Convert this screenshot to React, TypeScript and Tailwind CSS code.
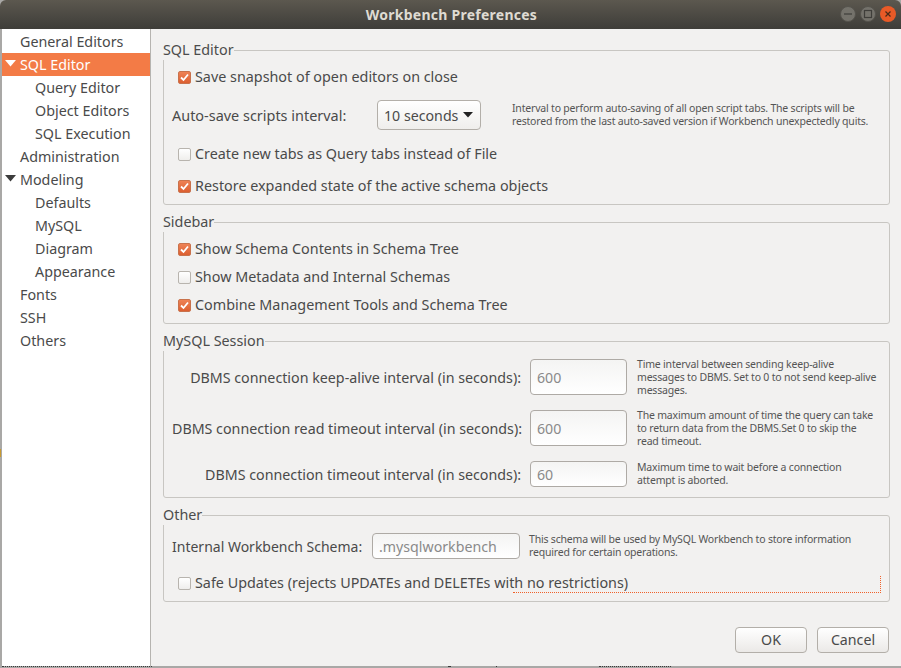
const font = { fontFamily: '"Noto Sans", sans-serif' };

function Check({ checked, label }: { checked?: boolean; label: string }) {
  return (
    <div className="flex items-center h-[26px] pl-[14px]">
      {checked ? (
        <span className="w-[13px] h-[13px] rounded-[2px] border border-[#c9724c] bg-gradient-to-b from-[#ee8255] to-[#dc5f30] flex items-center justify-center shrink-0">
          <svg width="11" height="11" viewBox="0 0 11 11" fill="none">
            <path d="M2 5.5 L4.5 8 L9 2.5" stroke="#fff" strokeWidth="1.8" />
          </svg>
        </span>
      ) : (
        <span className="w-[13px] h-[13px] rounded-[2px] border border-[#b8b4ae] bg-gradient-to-b from-white to-[#efeeec] shrink-0" />
      )}
      <span className="ml-[4px] text-[14.35px] leading-none whitespace-nowrap">{label}</span>
    </div>
  );
}

function Group({ title, children }: { title: string; children: React.ReactNode }) {
  return (
    <fieldset className="border border-[#c8c6c2] rounded-[3px] m-0 px-0 pb-0 pt-0 min-w-0">
      <legend className="h-5 p-0 -ml-px text-[14.35px] leading-5 text-[#4c4c4c] whitespace-nowrap">{title}</legend>
      {children}
    </fieldset>
  );
}

function Help({ children, className = "" }: { children: React.ReactNode; className?: string }) {
  return <div className={`text-[10.5px] leading-[13px] tracking-[-0.19px] whitespace-nowrap text-[#555] ${className}`}>{children}</div>;
}

function Field({ value, className }: { value: string; className: string }) {
  return (
    <div className={`border border-[#aeaaa5] rounded-[4px] bg-gradient-to-b from-[#f4f4f3] to-white flex items-center pl-[6px] pt-[1px] text-[14.2px] text-[#8a8a8a] shrink-0 ${className}`}>
      {value}
    </div>
  );
}

function SessionRow({ label, value, h, help, mt }: { label: string; value: string; h: string; help: React.ReactNode; mt: string }) {
  return (
    <div className={`flex items-center ${h} ${mt}`}>
      <div className="w-[349px] ml-[8px] pt-[2px] text-right text-[14.25px] whitespace-nowrap">{label}</div>
      <Field value={value} className={`ml-[9px] w-[97px] ${h}`} />
      <Help className="ml-[10px] w-[245px]">{help}</Help>
    </div>
  );
}

const items: { label: string; indent?: boolean; arrow?: boolean; selected?: boolean }[] = [
  { label: "General Editors" },
  { label: "SQL Editor", arrow: true, selected: true },
  { label: "Query Editor", indent: true },
  { label: "Object Editors", indent: true },
  { label: "SQL Execution", indent: true },
  { label: "Administration" },
  { label: "Modeling", arrow: true },
  { label: "Defaults", indent: true },
  { label: "MySQL", indent: true },
  { label: "Diagram", indent: true },
  { label: "Appearance", indent: true },
  { label: "Fonts" },
  { label: "SSH" },
  { label: "Others" },
];

function Btn({ label }: { label: string }) {
  return (
    <div className="w-[72px] h-[26px] border border-[#b3afa9] rounded-[4px] bg-gradient-to-b from-white to-[#ebe9e7] flex items-center justify-center text-[14.2px]">
      {label}
    </div>
  );
}

export default function App() {
  return (
    <div style={font} className="relative w-[901px] h-[668px] overflow-hidden bg-[#a9a8a6] text-[#4a4a4a] flex flex-col">
      <div className="h-[29px] shrink-0 rounded-t-[6px] bg-gradient-to-b from-[#5c584f] to-[#3e3d39] relative flex items-center justify-center pl-[2px]">
        <span className="text-[14px] font-bold tracking-[0.25px] text-[#dfdbd2]">Workbench Preferences</span>
        <div className="absolute right-[5px] top-[6px] flex gap-[4px]">
          <span className="w-4 h-4 rounded-full bg-[#74726b] border border-[#55534d] flex items-center justify-center">
            <svg width="10" height="10" viewBox="0 0 10 10"><path d="M1 5h8" stroke="#3f3e3a" strokeWidth="1.2" /></svg>
          </span>
          <span className="w-4 h-4 rounded-full bg-[#74726b] border border-[#55534d] flex items-center justify-center">
            <svg width="10" height="10" viewBox="0 0 10 10"><rect x="1.5" y="1.5" width="7" height="7" fill="none" stroke="#3f3e3a" strokeWidth="1.2" /></svg>
          </span>
          <span className="w-4 h-4 rounded-full bg-[#e95a27] flex items-center justify-center">
            <svg width="10" height="10" viewBox="0 0 10 10"><path d="M2.5 2.5l5 5M7.5 2.5l-5 5" stroke="#4a2a18" strokeWidth="1.2" /></svg>
          </span>
        </div>
      </div>
      <div className="h-[637px] shrink-0 ml-[2px] flex bg-[#f2f1f0]">
        <div className="w-[148px] shrink-0 bg-white pt-[1px] text-[14.3px]">
          {items.map((it) => (
            <div key={it.label} className={`h-[23px] flex items-center relative ${it.indent ? "pl-[33px]" : "pl-[18px]"} ${it.selected ? "bg-[#f37b46] text-white" : ""}`}>
              {it.arrow && (
                <svg className="absolute left-[3px] top-[7px]" width="11" height="7" viewBox="0 0 11 7">
                  <path d="M0 0h11L5.5 6.5z" fill={it.selected ? "#fff" : "#3c3c3c"} />
                </svg>
              )}
              {it.label}
            </div>
          ))}
        </div>
        <div className="w-px shrink-0 bg-[#b6b4b0]" />
        <div className="flex-1 relative pl-[12px] pr-[11px] pt-[11px] flex flex-col gap-[7px]">
          <Group title="SQL Editor">
            <div className="flex flex-col pb-[5px] pt-[4px]">
              <Check checked label="Save snapshot of open editors on close" />
              <div className="flex items-center mt-[10px] h-[30px]">
                <div className="w-[213px] pl-[8px] pt-[2px] text-[14.45px] whitespace-nowrap">Auto-save scripts interval:</div>
                <div className="w-[104px] h-[30px] border border-[#b3afa9] rounded-[4px] bg-gradient-to-b from-white to-[#efeeec] flex items-center justify-between pl-[6px] pr-[7px] text-[14.2px]">
                  <span className="pt-[2px]">10 seconds</span>
                  <svg width="10" height="6" viewBox="0 0 10 6"><path d="M0 0h10L5 5.5z" fill="#222" /></svg>
                </div>
                <Help className="ml-[31px] w-[365px]">
                  Interval to perform auto-saving of all open script tabs. The scripts will be
                  <br />
                  restored from the last auto-saved version if Workbench unexpectedly quits.
                </Help>
              </div>
              <div className="mt-[11px]"><Check label="Create new tabs as Query tabs instead of File" /></div>
              <div className="mt-[6px]"><Check checked label="Restore expanded state of the active schema objects" /></div>
            </div>
          </Group>
          <Group title="Sidebar">
            <div className="flex flex-col gap-[2px] pt-[4px] pb-[5px]">
              <Check checked label="Show Schema Contents in Schema Tree" />
              <Check label="Show Metadata and Internal Schemas" />
              <Check checked label="Combine Management Tools and Schema Tree" />
            </div>
          </Group>
          <Group title="MySQL Session">
            <div className="pb-[10px]">
              <SessionRow mt="mt-[8px]" label="DBMS connection keep-alive interval (in seconds):" value="600" h="h-[36px]"
                help={<>Time interval between sending keep-alive<br />messages to DBMS. Set to 0 to not send keep-alive<br />messages.</>} />
              <SessionRow mt="mt-[15px]" label="DBMS connection read timeout interval (in seconds):" value="600" h="h-[36px]"
                help={<>The maximum amount of time the query can take<br />to return data from the DBMS.Set 0 to skip the<br />read timeout.</>} />
              <SessionRow mt="mt-[15px]" label="DBMS connection timeout interval (in seconds):" value="60" h="h-[26px]"
                help={<>Maximum time to wait before a connection<br />attempt is aborted.</>} />
            </div>
          </Group>
          <Group title="Other">
            <div className="pb-[5px]">
              <div className="flex items-center mt-[8px]">
                <div className="ml-[8px] w-[200px] text-[14px] whitespace-nowrap">Internal Workbench Schema:</div>
                <Field value=".mysqlworkbench" className="w-[148px] h-[26px]" />
                <Help className="ml-[9px] w-[340px]">
                  This schema will be used by MySQL Workbench to store information
                  <br />
                  required for certain operations.
                </Help>
              </div>
              <div className="mt-[11px] relative">
                <Check label="Safe Updates (rejects UPDATEs and DELETEs with no restrictions)" />
                <div className="absolute left-[349px] top-[6px] w-[368px] h-[17px] border-b border-r border-dotted border-[#f0622a]" />
              </div>
            </div>
          </Group>
          <div className="flex justify-end gap-[10px] mt-[18px] mr-px">
            <Btn label="OK" />
            <Btn label="Cancel" />
          </div>
        </div>
      </div>
      <div className="h-[2px] flex items-start">
        <span className="ml-[2px] w-[150px] h-px border-t border-dotted border-[#3a3a3a]" />
        <span className="ml-[296px] w-[3px] h-px bg-[#3a3a3a]" />
        <span className="ml-[45px] w-px h-px bg-[#3a3a3a]" />
        <span className="ml-[102px] w-[72px] h-px border-t border-dotted border-[#3a3a3a]" />
      </div>
      <div className="absolute left-0 top-[449px] w-px h-[8px] bg-[#c89a30]" />
    </div>
  );
}
